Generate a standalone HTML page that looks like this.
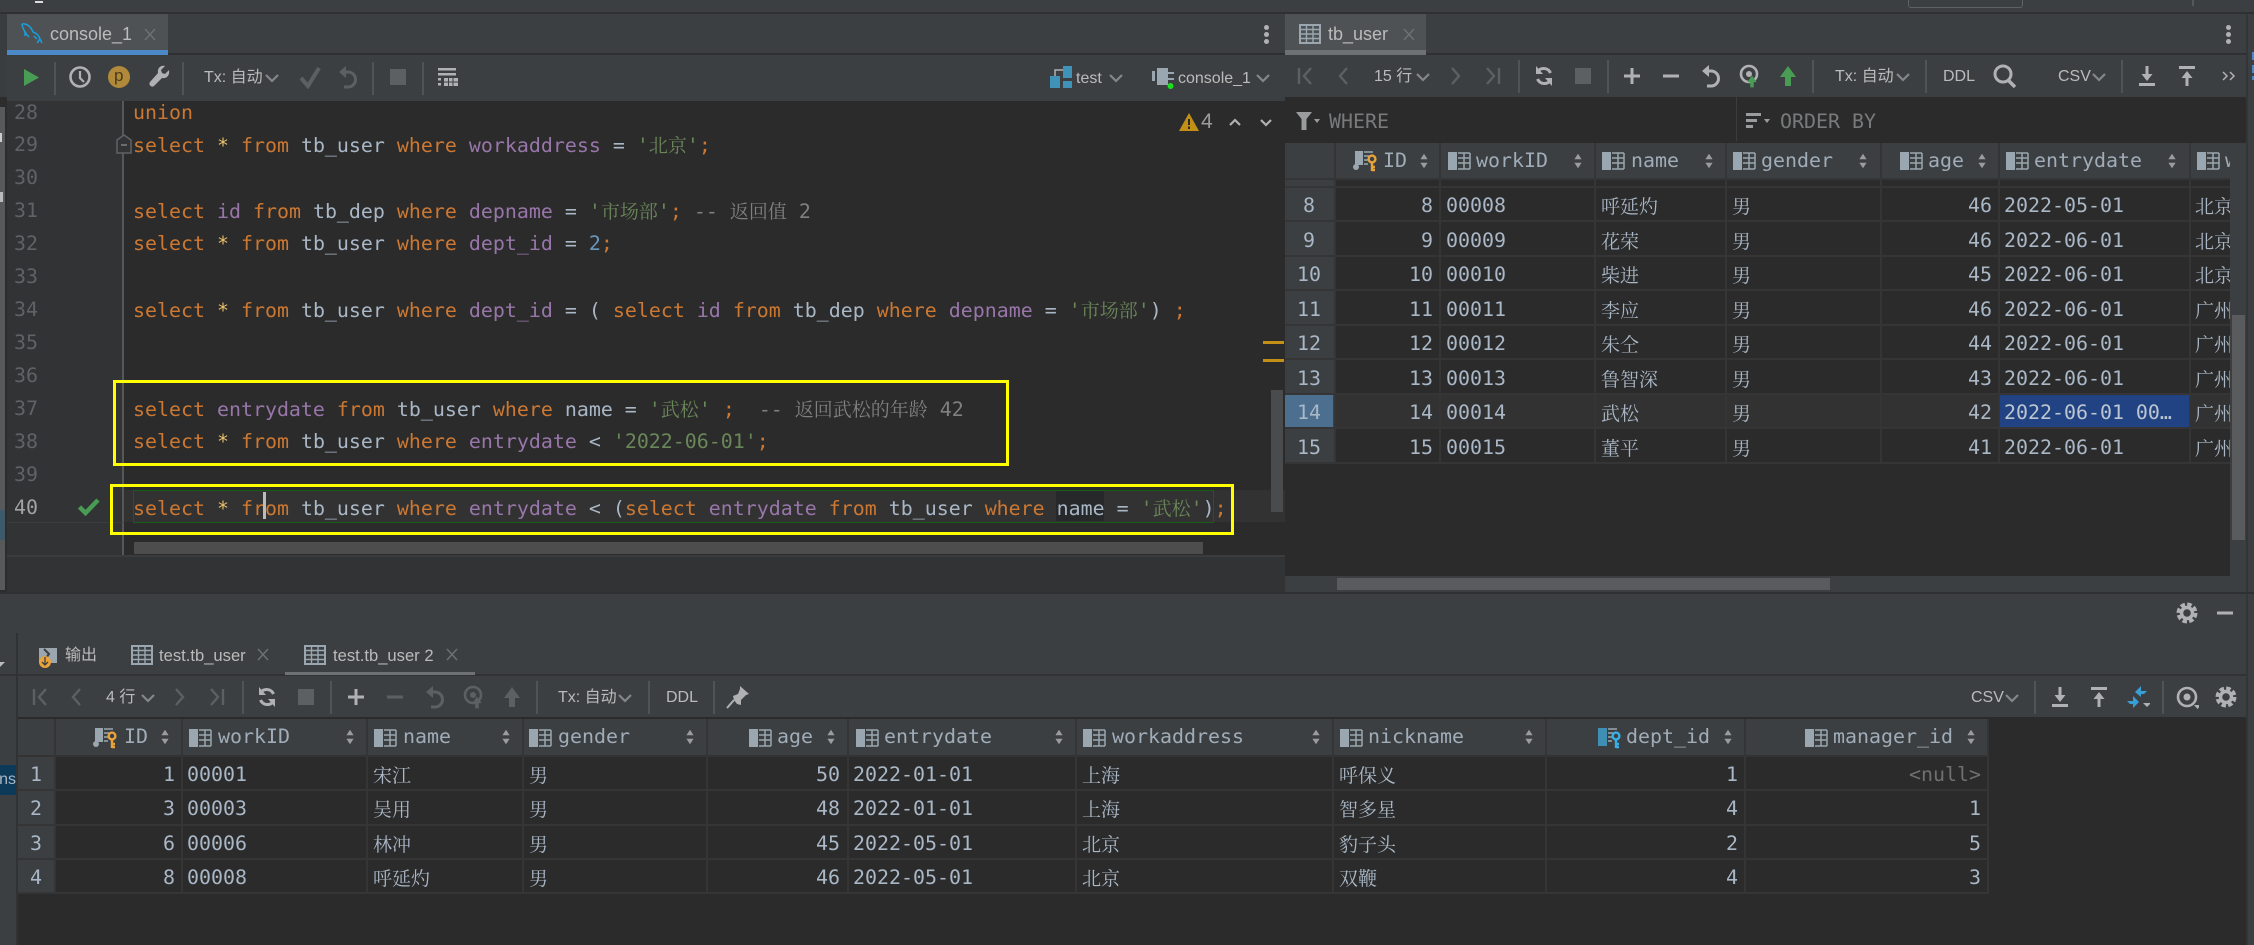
<!DOCTYPE html>
<html><head><meta charset="utf-8"><style>
html,body{margin:0;padding:0}
body{width:2254px;height:945px;overflow:hidden;position:relative;background:#3c3f41;font-family:"Liberation Sans","Noto Sans CJK SC",sans-serif;color:#bbb}
.a{position:absolute}
.i{position:absolute;width:24px;height:24px}
.sp{position:absolute;width:2px;background:#505456}
.t{position:absolute;white-space:pre;font-size:16px;line-height:24px;color:#bbbbbb;margin-top:1px}
.m,.l,.row span,.h{font-family:"DejaVu Sans Mono","Liberation Mono","Noto Serif CJK SC",monospace;font-size:19.93px;white-space:pre}
i{font-style:normal;font-size:19px;font-family:"Noto Serif CJK SC","Noto Sans CJK SC",serif}
.l{position:absolute;left:133px;height:33px;line-height:33px;color:#a9b7c6}
.n{position:absolute;left:14px;font-family:"DejaVu Sans Mono",monospace;font-size:19.93px;line-height:33px;color:#606366}
.k{color:#cc7832}.p{color:#9876aa}.s{color:#6a8759}.c{color:#808080}.d{color:#6897bb}.x{color:#e8bf6a}
.row{position:absolute;left:0;height:34px}
.row span{position:absolute;top:1px;line-height:34px;color:#a9b7c6}
.R{width:200px;text-align:right}
.h{position:absolute;line-height:34px;color:#a0adb9}
.hl{position:absolute;height:2px;background:#353535}
.vl{position:absolute;width:2px;background:#353535}
.gr{position:absolute;background:#3c3f41}
</style></head><body>
<svg width="0" height="0" style="position:absolute">
<defs>
<symbol id="first" viewBox="0 0 24 24"><path d="M6 4v16M18 4l-7 8 7 8" fill="none" stroke="currentColor" stroke-width="2.4"/></symbol>
<symbol id="prev" viewBox="0 0 24 24"><path d="M15 4l-7 8 7 8" fill="none" stroke="currentColor" stroke-width="2.4"/></symbol>
<symbol id="next" viewBox="0 0 24 24"><path d="M9 4l7 8-7 8" fill="none" stroke="currentColor" stroke-width="2.4"/></symbol>
<symbol id="last" viewBox="0 0 24 24"><path d="M6 4l7 8-7 8M18 4v16" fill="none" stroke="currentColor" stroke-width="2.4"/></symbol>
<symbol id="refresh" viewBox="0 0 24 24"><path d="M18.5 9a7.5 7.5 0 0 0-12.5-2M5.500 15a7.500 7.500 0 0 0 12.500 2" fill="none" stroke="currentColor" stroke-width="3"/><path d="M4 2v8h7zM20 22v-8h-7z" fill="currentColor"/></symbol>
<symbol id="stop" viewBox="0 0 24 24"><rect x="4" y="4" width="16" height="16" fill="#5d6062"/></symbol>
<symbol id="plus" viewBox="0 0 24 24"><path d="M12 4v16M4 12h16" fill="none" stroke="currentColor" stroke-width="3"/></symbol>
<symbol id="minus" viewBox="0 0 24 24"><path d="M4 12h16" fill="none" stroke="currentColor" stroke-width="3"/></symbol>
<symbol id="undo" viewBox="0 0 24 24"><path d="M8 7h3.500a7.500 7.500 0 0 1 8 7.500A7.500 7.500 0 0 1 11.500 22H8" fill="none" stroke="currentColor" stroke-width="3"/><path d="M10 1L3 7l7 6z" fill="currentColor"/></symbol>
<symbol id="revert" viewBox="0 0 24 24"><circle cx="11" cy="10" r="8" fill="none" stroke="currentColor" stroke-width="2.6"/><circle cx="11" cy="10" r="3" fill="currentColor"/></symbol>
<symbol id="up" viewBox="0 0 24 24"><path d="M12 2L4 13h5v9h6v-9h5z" fill="currentColor"/></symbol>
<symbol id="down" viewBox="0 0 24 24"><path d="M10.500 2h3v8h4l-5.500 7-5.500-7h4zM4 19h16v3H4z" fill="currentColor"/></symbol>
<symbol id="upl" viewBox="0 0 24 24"><path d="M4 2h16v3H4zM12 7l5.500 7h-4v8h-3v-8h-4z" fill="currentColor"/></symbol>
<symbol id="gear" viewBox="0 0 24 24"><circle cx="12" cy="12" r="8.500" fill="none" stroke="currentColor" stroke-width="4" stroke-dasharray="4.400 2.270"/><circle cx="12" cy="12" r="5.500" fill="none" stroke="currentColor" stroke-width="3.400"/></symbol>
<symbol id="ch" viewBox="0 0 24 24"><path d="M6 9l6 6 6-6" fill="none" stroke="#83878a" stroke-width="2.200"/></symbol>
<symbol id="grid" viewBox="0 0 24 24"><rect x="2" y="3" width="20" height="18" fill="none" stroke="#9aa7b0" stroke-width="2"/><path d="M2 7.500h20M2 12h20M2 16.500h20M8.500 3v18M15 3v18" stroke="#9aa7b0" stroke-width="1.400"/></symbol>
<symbol id="col" viewBox="0 0 24 24"><rect x="1" y="3" width="9" height="18" fill="#9aa7b0"/><path d="M11 4h12M11 9h12M11 14h12M11 20h12M17 4v16M23 4v16" stroke="#9aa7b0" stroke-width="1.500" fill="none"/></symbol>
<symbol id="key" viewBox="0 0 26 24"><rect x="3" y="3" width="8" height="14" fill="#9aa7b0"/><circle cx="4" cy="19" r="3" fill="#9aa7b0"/><path d="M12 4h9M12 8h5M12 12h4M12 16h4" stroke="#9aa7b0" stroke-width="1.600"/><circle cx="20" cy="11" r="3.400" fill="none" stroke="#e8a33d" stroke-width="2.400"/><path d="M20 14v9M20 19h3M20 22h3" stroke="#e8a33d" stroke-width="2.400"/></symbol>
<symbol id="keyb" viewBox="0 0 26 24"><rect x="2" y="3" width="9" height="18" fill="#3f8fb5"/><path d="M12 4h9M12 8h5M12 12h4M12 16h4" stroke="#9aa7b0" stroke-width="1.600"/><circle cx="20" cy="11" r="3.400" fill="none" stroke="#38b0e6" stroke-width="2.400"/><path d="M20 14v9M20 19h3M20 22h3" stroke="#38b0e6" stroke-width="2.400"/></symbol>
<symbol id="sort" viewBox="0 0 10 20"><path d="M5 2l4 6H1zM5 18l-4-6h8z" fill="#9a9c9e"/></symbol>
</defs></svg>

<!-- top strip -->
<div class="a" style="left:35px;top:1px;width:8px;height:2px;background:#ddd"></div>
<div class="a" style="left:1908px;top:-4px;width:113px;height:10px;border:1px solid #5e6263;border-radius:3px"></div>
<div class="a" style="left:2192px;top:0;width:2px;height:6px;background:#55585a"></div>
<div class="a" style="left:0;top:12px;width:2254px;height:2px;background:#2e3032"></div>

<!-- left sliver -->
<div class="a" style="left:0;top:14px;width:7px;height:83px;background:#3a3d3f"></div>
<div class="a" style="left:0;top:97px;width:7px;height:495px;background:#2d2d2d"></div>
<div class="a" style="left:0;top:107px;width:5px;height:483px;background:#58595b"></div>
<div class="a" style="left:0;top:510px;width:5px;height:30px;background:#3d5a6b"></div>
<div class="a" style="left:0;top:133px;width:2px;height:9px;background:#ccc"></div>
<div class="a" style="left:0;top:192px;width:3px;height:10px;background:#bbb"></div>

<!-- left tabbar -->
<div class="a" style="left:7px;top:14px;width:161px;height:36px;background:#4e5254"></div>
<div class="a" style="left:7px;top:50px;width:161px;height:5px;background:#4a88c7"></div>
<div class="a" style="left:168px;top:53px;width:1117px;height:2px;background:#2e3032"></div>
<svg class="a" style="left:20px;top:22px;width:24px;height:23px" viewBox="0 0 24 23"><path d="M2 2c5-1 9 3 11 8 3 1 6 3 7 7l2 4M20 17l-3 4M2 2c0 4 3 8 5 11l2 2M5 9l0 5M17 17l-3-3" fill="none" stroke="#1a9fdc" stroke-width="1.500"/></svg>
<div class="t" style="left:50px;top:21px;font-size:18px;color:#bbb">console_1</div>
<svg class="i" style="left:138px;top:23px;width:24px;height:24px"><path d="M7 6l10 11M17 6L7 17" stroke="#6c7072" stroke-width="1.500"/></svg>
<div class="a" style="left:1263.500px;top:25px;width:5px;height:5px;border-radius:3px;background:#afb1b3"></div>
<div class="a" style="left:1263.500px;top:32px;width:5px;height:5px;border-radius:3px;background:#afb1b3"></div>
<div class="a" style="left:1263.500px;top:39px;width:5px;height:5px;border-radius:3px;background:#afb1b3"></div>

<!-- left toolbar -->
<svg class="a" style="left:24px;top:69px;width:15px;height:17px"><path d="M0 0l15 8.500L0 17z" fill="#499c54"/></svg>
<div class="sp" style="left:54px;top:62px;height:33px"></div>
<svg class="i" style="left:68px;top:65px"><circle cx="12" cy="12" r="9.500" fill="none" stroke="#afb1b3" stroke-width="2.600"/><path d="M12 6v7l4 4" fill="none" stroke="#afb1b3" stroke-width="2.200"/></svg>
<svg class="i" style="left:107px;top:65px"><circle cx="12" cy="12" r="11" fill="#b08a3a"/></svg>
<div class="t" style="left:114px;top:63px;font-size:17px;color:#4a3a1a">p</div>
<svg class="i" style="left:147px;top:65px"><path d="M22 5l-4 4-3-1-1-3 4-4c-4-1-8 2-7 7L3 17c-2 3 2 6 4 4l8-8c5 1 8-3 7-8z" fill="#afb1b3"/></svg>
<div class="sp" style="left:182px;top:62px;height:33px"></div>
<div class="t" style="left:204px;top:65px">Tx: 自动</div>
<svg class="i" style="left:260px;top:66px"><use href="#ch"/></svg>
<svg class="i" style="left:298px;top:65px"><path d="M3 13l7 8L21 3" fill="none" stroke="#5d6062" stroke-width="4"/></svg>
<svg class="i" style="left:336px;top:65px;color:#5d6062"><use href="#undo"/></svg>
<div class="sp" style="left:372px;top:62px;height:33px"></div>
<svg class="i" style="left:386px;top:65px"><use href="#stop"/></svg>
<div class="sp" style="left:422px;top:62px;height:33px"></div>
<svg class="i" style="left:436px;top:66px"><path d="M2 2h18v2.500H2zM2 7h18v2.500H2z" fill="#afb1b3"/><path d="M2 12h3v2.500H2zM2 17h3v2.500H2zM8 12h14v8H8z" fill="#afb1b3"/><path d="M8 16h14M12.500 12v8M17 12v8" stroke="#3c3f41"/></svg>
<svg class="i" style="left:1049px;top:65px"><path d="M14 1h9v12h-9zM1 11h10v12H1zM14 16h9v7h-9z" fill="#3f93b8"/><path d="M6 11V5h8" fill="none" stroke="#afb1b3" stroke-width="1.500"/></svg>
<div class="t" style="left:1076px;top:66px">test</div>
<svg class="i" style="left:1104px;top:66px"><use href="#ch"/></svg>
<svg class="i" style="left:1151px;top:65px"><path d="M6 3h11v17H6zM1 6h3v10H1z" fill="#9aa7b0"/><path d="M17 8h6M17 14h6" stroke="#9aa7b0" stroke-width="2"/><circle cx="19.500" cy="21" r="3" fill="#19e01c"/></svg>
<div class="t" style="left:1178px;top:66px">console_1</div>
<svg class="i" style="left:1251px;top:66px"><use href="#ch"/></svg>

<!-- editor -->
<div class="a" style="left:7px;top:101px;width:1278px;height:454px;background:#2b2b2b"></div>
<div class="a" style="left:7px;top:101px;width:116px;height:454px;background:#313335"></div>
<div class="a" style="left:122px;top:101px;width:2px;height:454px;background:#555759"></div>
<div class="a" style="left:124px;top:490px;width:1161px;height:32px;background:#323232"></div>
<div class="a" style="left:7px;top:522px;width:116px;height:1px;background:#3a3c3e"></div>
<div class="a" style="left:7px;top:555px;width:1278px;height:2px;background:#3a3c3e"></div>
<div class="a" style="left:7px;top:557px;width:1278px;height:35px;background:#313335"></div>
<svg class="a" style="left:116px;top:134px;width:16px;height:20px"><path d="M1 6l7-5 7 5v13H1z" fill="#313335" stroke="#606366" stroke-width="1.500"/><path d="M5 11h6" stroke="#808080" stroke-width="1.500"/></svg>

<div class="n" style="top:95.500px">28</div>
<div class="n" style="top:128px">29</div>
<div class="n" style="top:161px">30</div>
<div class="n" style="top:194px">31</div>
<div class="n" style="top:227px">32</div>
<div class="n" style="top:260px">33</div>
<div class="n" style="top:293px">34</div>
<div class="n" style="top:326px">35</div>
<div class="n" style="top:359px">36</div>
<div class="n" style="top:392px">37</div>
<div class="n" style="top:425px">38</div>
<div class="n" style="top:458px">39</div>
<div class="n" style="top:491px;color:#a4a3a3">40</div>
<svg class="a" style="left:78px;top:498px;width:22px;height:18px"><path d="M1.500 9l6 6L20 2" fill="none" stroke="#499c54" stroke-width="4.500"/></svg>

<div class="a" style="left:1056px;top:491px;width:48px;height:30px;background:#26282a"></div>
<div class="a" style="left:133px;top:490px;width:1079px;height:31px;border:1px solid #175c17;box-sizing:content-box"></div>

<div class="l" style="top:95.500px"><span class="k">union</span></div>
<div class="l" style="top:127.500px"><span class="k">select</span> <span class="x">*</span> <span class="k">from</span> tb_user <span class="k">where</span> <span class="p">workaddress</span> = <span class="s">'<i>北京</i>'</span><span class="k">;</span></div>
<div class="l" style="top:194px"><span class="k">select</span> <span class="p">id</span> <span class="k">from</span> tb_dep <span class="k">where</span> <span class="p">depname</span> = <span class="s">'<i>市场部</i>'</span><span class="k">;</span> <span class="c">-- <i>返回值</i> 2</span></div>
<div class="l" style="top:227px"><span class="k">select</span> <span class="x">*</span> <span class="k">from</span> tb_user <span class="k">where</span> <span class="p">dept_id</span> = <span class="d">2</span><span class="k">;</span></div>
<div class="l" style="top:293px"><span class="k">select</span> <span class="x">*</span> <span class="k">from</span> tb_user <span class="k">where</span> <span class="p">dept_id</span> = ( <span class="k">select</span> <span class="p">id</span> <span class="k">from</span> tb_dep <span class="k">where</span> <span class="p">depname</span> = <span class="s">'<i>市场部</i>'</span>) <span class="k">;</span></div>
<div class="l" style="top:392px"><span class="k">select</span> <span class="p">entrydate</span> <span class="k">from</span> tb_user <span class="k">where</span> name = <span class="s">'<i>武松</i>'</span> <span class="k">;</span>  <span class="c">-- <i>返回武松的年龄</i> 42</span></div>
<div class="l" style="top:425px"><span class="k">select</span> <span class="x">*</span> <span class="k">from</span> tb_user <span class="k">where</span> <span class="p">entrydate</span> &lt; <span class="s">'2022-06-01'</span><span class="k">;</span></div>
<div class="l" style="top:491px"><span class="k">select</span> <span class="x">*</span> <span class="k">from</span> tb_user <span class="k">where</span> <span class="p">entrydate</span> &lt; (<span class="k">select</span> <span class="p">entrydate</span> <span class="k">from</span> tb_user <span class="k">where</span> name = <span class="s">'<i>武松</i>'</span>)<span class="k">;</span></div>
<div class="a" style="left:263px;top:492px;width:3px;height:27px;background:#bbbbbb"></div>

<!-- editor overlays -->
<svg class="a" style="left:1179px;top:113px;width:20px;height:18px"><path d="M10 0l10 18H0z" fill="#c29016"/><path d="M10 6v6M10 13.500v2.500" stroke="#2b2b2b" stroke-width="2"/></svg>
<div class="t" style="left:1201px;top:109px;font-size:21px;color:#9a9c9e">4</div>
<svg class="i" style="left:1223px;top:110px"><path d="M7 15l5-5 5 5" fill="none" stroke="#afb1b3" stroke-width="2.200"/></svg>
<svg class="i" style="left:1254px;top:110px"><path d="M7 10l5 5 5-5" fill="none" stroke="#afb1b3" stroke-width="2.200"/></svg>
<div class="a" style="left:1271px;top:390px;width:12px;height:122px;background:#494b4c"></div>
<div class="a" style="left:1263px;top:341px;width:21px;height:3px;background:#c29016"></div>
<div class="a" style="left:1263px;top:359px;width:21px;height:3px;background:#c29016"></div>
<div class="a" style="left:134px;top:542px;width:1069px;height:12px;background:#4d4d4d"></div>

<!-- yellow boxes -->
<div class="a" style="left:113px;top:380px;width:890px;height:80px;border:3px solid #ffff00"></div>
<div class="a" style="left:110px;top:484px;width:1118px;height:45px;border:3px solid #ffff00"></div>

<!-- right panel -->
<div class="a" style="left:1285px;top:14px;width:961px;height:39px;background:#3c3f41"></div>
<div class="a" style="left:1285px;top:14px;width:141px;height:36px;background:#4e5254"></div>
<div class="a" style="left:1285px;top:50px;width:141px;height:5px;background:#6d7173"></div>
<div class="a" style="left:1426px;top:53px;width:820px;height:2px;background:#2e3032"></div>
<svg class="i" style="left:1298px;top:22px"><use href="#grid"/></svg>
<div class="t" style="left:1328px;top:21px;font-size:18px">tb_user</div>
<svg class="i" style="left:1397px;top:23px"><path d="M7 6l10 11M17 6L7 17" stroke="#6c7072" stroke-width="1.500"/></svg>
<div class="a" style="left:2226px;top:25px;width:5px;height:5px;border-radius:3px;background:#afb1b3"></div>
<div class="a" style="left:2226px;top:32px;width:5px;height:5px;border-radius:3px;background:#afb1b3"></div>
<div class="a" style="left:2226px;top:39px;width:5px;height:5px;border-radius:3px;background:#afb1b3"></div>
<div class="a" style="left:2246px;top:14px;width:2px;height:578px;background:#333537"></div>
<div class="a" style="left:2252px;top:52px;width:2px;height:8px;background:#4a88c7"></div>
<div class="a" style="left:2252px;top:65px;width:2px;height:8px;background:#4a88c7"></div>
<div class="a" style="left:2252px;top:76px;width:2px;height:4px;background:#4a88c7"></div>

<!-- right toolbar, cy=76 -->
<svg class="i" style="left:1293px;top:64px;color:#5d6062"><use href="#first"/></svg>
<svg class="i" style="left:1332px;top:64px;color:#5d6062"><use href="#prev"/></svg>
<div class="t" style="left:1374px;top:64px">15 行</div>
<svg class="i" style="left:1411px;top:65px"><use href="#ch"/></svg>
<svg class="i" style="left:1443px;top:64px;color:#5d6062"><use href="#next"/></svg>
<svg class="i" style="left:1481px;top:64px;color:#5d6062"><use href="#last"/></svg>
<div class="sp" style="left:1518px;top:60px;height:33px"></div>
<svg class="i" style="left:1532px;top:64px;color:#afb1b3"><use href="#refresh"/></svg>
<svg class="i" style="left:1571px;top:64px"><use href="#stop"/></svg>
<div class="sp" style="left:1607px;top:60px;height:33px"></div>
<svg class="i" style="left:1620px;top:64px;color:#afb1b3"><use href="#plus"/></svg>
<svg class="i" style="left:1659px;top:64px;color:#afb1b3"><use href="#minus"/></svg>
<svg class="i" style="left:1699px;top:64px;color:#afb1b3"><use href="#undo"/></svg>
<svg class="i" style="left:1738px;top:64px;color:#afb1b3"><use href="#revert"/></svg>
<svg class="a" style="left:1745px;top:74px;width:14px;height:15px;color:#499c54"><use href="#up"/></svg>
<svg class="i" style="left:1776px;top:64px;color:#499c54"><use href="#up"/></svg>
<div class="sp" style="left:1812px;top:60px;height:33px"></div>
<div class="t" style="left:1835px;top:64px">Tx: 自动</div>
<svg class="i" style="left:1891px;top:65px"><use href="#ch"/></svg>
<div class="sp" style="left:1925px;top:60px;height:33px"></div>
<div class="t" style="left:1943px;top:64px">DDL</div>
<svg class="i" style="left:1993px;top:64px"><circle cx="10" cy="10" r="8" fill="none" stroke="#afb1b3" stroke-width="3"/><path d="M15 16l7 7" stroke="#afb1b3" stroke-width="3.500"/></svg>
<div class="t" style="left:2058px;top:64px">CSV</div>
<svg class="i" style="left:2087px;top:65px"><use href="#ch"/></svg>
<div class="sp" style="left:2121px;top:60px;height:33px"></div>
<svg class="i" style="left:2135px;top:64px;color:#afb1b3"><use href="#down"/></svg>
<svg class="i" style="left:2175px;top:64px;color:#afb1b3"><use href="#upl"/></svg>
<svg class="i" style="left:2217px;top:64px"><path d="M6 8l4 4-4 4M13 8l4 4-4 4" fill="none" stroke="#afb1b3" stroke-width="1.500"/></svg>

<!-- filter bar -->
<div class="a" style="left:1285px;top:97px;width:961px;height:495px;background:#2b2b2b"></div>
<div class="a" style="left:1736px;top:97px;width:1px;height:44px;background:#3a3c3e"></div>
<svg class="a" style="left:1296px;top:112px;width:24px;height:18px"><path d="M0 0h16l-5.500 7v11h-5V7z" fill="#9a9c9e"/><path d="M18 7h6l-3 4z" fill="#9a9c9e"/></svg>
<div class="m a" style="left:1329px;top:108px;line-height:28px;color:#787a7c">WHERE</div>
<svg class="a" style="left:1746px;top:112px;width:24px;height:18px"><path d="M0 1h15v3H0zM0 7h11v3H0zM0 13h7v3H0z" fill="#9a9c9e"/><path d="M18 7h6l-3 4z" fill="#9a9c9e"/></svg>
<div class="m a" style="left:1780px;top:108px;line-height:28px;color:#787a7c">ORDER BY</div>

<!-- right table -->
<div class="gr" style="left:1285px;top:143px;width:945px;height:35px"></div>
<div class="gr" style="left:1285px;top:178px;width:50px;height:285px"></div>
<div class="a" style="left:1285px;top:395px;width:48px;height:33px;background:#4c6f90"></div>
<div class="a" style="left:1335px;top:395px;width:895px;height:33px;background:#323232"></div>
<div class="a" style="left:2000px;top:395px;width:189px;height:33px;background:#214283"></div>
<div class="hl" style="left:1285px;top:178px;width:945px"></div>
<div class="hl" style="left:1285px;top:186px;width:945px"></div>
<div class="hl" style="left:1285px;top:220px;width:945px"></div>
<div class="hl" style="left:1285px;top:255px;width:945px"></div>
<div class="hl" style="left:1285px;top:289px;width:945px"></div>
<div class="hl" style="left:1285px;top:324px;width:945px"></div>
<div class="hl" style="left:1285px;top:358px;width:945px"></div>
<div class="hl" style="left:1285px;top:393px;width:945px"></div>
<div class="hl" style="left:1285px;top:427px;width:945px"></div>
<div class="hl" style="left:1285px;top:462px;width:945px"></div>
<div class="vl" style="left:1334px;top:143px;height:320px"></div>
<div class="vl" style="left:1439px;top:143px;height:320px"></div>
<div class="vl" style="left:1594px;top:143px;height:320px"></div>
<div class="vl" style="left:1725px;top:143px;height:320px"></div>
<div class="vl" style="left:1880px;top:143px;height:320px"></div>
<div class="vl" style="left:1998px;top:143px;height:320px"></div>
<div class="vl" style="left:2189px;top:143px;height:320px"></div>

<svg class="i" style="left:1352px;top:148px;width:26px"><use href="#key"/></svg><div class="h" style="left:1383px;top:144px">ID</div><svg class="a" style="left:1419px;top:152px;width:10px;height:18px"><use href="#sort"/></svg>
<svg class="i" style="left:1447px;top:149px"><use href="#col"/></svg><div class="h" style="left:1476px;top:144px">workID</div><svg class="a" style="left:1573px;top:152px;width:10px;height:18px"><use href="#sort"/></svg>
<svg class="i" style="left:1601px;top:149px"><use href="#col"/></svg><div class="h" style="left:1631px;top:144px">name</div><svg class="a" style="left:1704px;top:152px;width:10px;height:18px"><use href="#sort"/></svg>
<svg class="i" style="left:1732px;top:149px"><use href="#col"/></svg><div class="h" style="left:1761px;top:144px">gender</div><svg class="a" style="left:1858px;top:152px;width:10px;height:18px"><use href="#sort"/></svg>
<svg class="i" style="left:1899px;top:149px"><use href="#col"/></svg><div class="h" style="left:1928px;top:144px">age</div><svg class="a" style="left:1977px;top:152px;width:10px;height:18px"><use href="#sort"/></svg>
<svg class="i" style="left:2005px;top:149px"><use href="#col"/></svg><div class="h" style="left:2034px;top:144px">entrydate</div><svg class="a" style="left:2167px;top:152px;width:10px;height:18px"><use href="#sort"/></svg>
<div class="a" style="left:2190px;top:143px;width:40px;height:35px;overflow:hidden"><svg class="i" style="left:6px;top:6px"><use href="#col"/></svg><div class="h" style="left:35px;top:1px">w</div></div>

<div class="row" style="top:188px"><span style="left:1285px;width:48px;text-align:center">8</span><span class="R" style="left:1233px">8</span><span style="left:1446px">00008</span><span style="left:1601px"><i>呼延灼</i></span><span style="left:1732px"><i>男</i></span><span class="R" style="left:1792px">46</span><span style="left:2004px">2022-05-01</span><span style="left:2195px;width:35px;overflow:hidden"><i>北京</i></span></div>
<div class="row" style="top:223px"><span style="left:1285px;width:48px;text-align:center">9</span><span class="R" style="left:1233px">9</span><span style="left:1446px">00009</span><span style="left:1601px"><i>花荣</i></span><span style="left:1732px"><i>男</i></span><span class="R" style="left:1792px">46</span><span style="left:2004px">2022-06-01</span><span style="left:2195px;width:35px;overflow:hidden"><i>北京</i></span></div>
<div class="row" style="top:257px"><span style="left:1285px;width:48px;text-align:center">10</span><span class="R" style="left:1233px">10</span><span style="left:1446px">00010</span><span style="left:1601px"><i>柴进</i></span><span style="left:1732px"><i>男</i></span><span class="R" style="left:1792px">45</span><span style="left:2004px">2022-06-01</span><span style="left:2195px;width:35px;overflow:hidden"><i>北京</i></span></div>
<div class="row" style="top:292px"><span style="left:1285px;width:48px;text-align:center">11</span><span class="R" style="left:1233px">11</span><span style="left:1446px">00011</span><span style="left:1601px"><i>李应</i></span><span style="left:1732px"><i>男</i></span><span class="R" style="left:1792px">46</span><span style="left:2004px">2022-06-01</span><span style="left:2195px;width:35px;overflow:hidden"><i>广州</i></span></div>
<div class="row" style="top:326px"><span style="left:1285px;width:48px;text-align:center">12</span><span class="R" style="left:1233px">12</span><span style="left:1446px">00012</span><span style="left:1601px"><i>朱仝</i></span><span style="left:1732px"><i>男</i></span><span class="R" style="left:1792px">44</span><span style="left:2004px">2022-06-01</span><span style="left:2195px;width:35px;overflow:hidden"><i>广州</i></span></div>
<div class="row" style="top:361px"><span style="left:1285px;width:48px;text-align:center">13</span><span class="R" style="left:1233px">13</span><span style="left:1446px">00013</span><span style="left:1601px"><i>鲁智深</i></span><span style="left:1732px"><i>男</i></span><span class="R" style="left:1792px">43</span><span style="left:2004px">2022-06-01</span><span style="left:2195px;width:35px;overflow:hidden"><i>广州</i></span></div>
<div class="row" style="top:395px"><span style="left:1285px;width:48px;text-align:center">14</span><span class="R" style="left:1233px">14</span><span style="left:1446px">00014</span><span style="left:1601px"><i>武松</i></span><span style="left:1732px"><i>男</i></span><span class="R" style="left:1792px">42</span><span style="left:2004px;color:#bcc6d0">2022-06-01 00…</span><span style="left:2195px;width:35px;overflow:hidden"><i>广州</i></span></div>
<div class="row" style="top:430px"><span style="left:1285px;width:48px;text-align:center">15</span><span class="R" style="left:1233px">15</span><span style="left:1446px">00015</span><span style="left:1601px"><i>董平</i></span><span style="left:1732px"><i>男</i></span><span class="R" style="left:1792px">41</span><span style="left:2004px">2022-06-01</span><span style="left:2195px;width:35px;overflow:hidden"><i>广州</i></span></div>

<!-- right table scrollbars -->
<div class="a" style="left:2230px;top:143px;width:16px;height:433px;background:#3c3f41"></div>
<div class="a" style="left:2232px;top:315px;width:13px;height:225px;background:#595b5d"></div>
<div class="a" style="left:1285px;top:576px;width:961px;height:16px;background:#3c3f41"></div>
<div class="a" style="left:1337px;top:578px;width:493px;height:12px;background:#595b5d"></div>

<!-- bottom panel -->
<div class="a" style="left:0;top:592px;width:2254px;height:2px;background:#2e3032"></div>
<svg class="i" style="left:2175px;top:601px;color:#afb1b3"><use href="#gear"/></svg>
<svg class="i" style="left:2213px;top:601px;color:#afb1b3"><use href="#minus"/></svg>
<div class="a" style="left:16px;top:633px;width:2px;height:312px;background:#303234"></div>
<div class="a" style="left:0;top:674px;width:2246px;height:2px;background:#303234"></div>
<div class="a" style="left:2246px;top:594px;width:2px;height:351px;background:#333537"></div>
<svg class="a" style="left:0;top:662px;width:5px;height:6px"><path d="M0 0h5L0 5z" fill="#bbb"/></svg>
<div class="a" style="left:0;top:765px;width:16px;height:30px;background:#0d3a58;color:#a9b7c6;font-size:16px;line-height:30px;text-align:right;padding-right:0;white-space:pre;overflow:hidden;direction:rtl">ns</div>

<svg class="a" style="left:38px;top:647px;width:20px;height:22px"><rect x="1" y="1" width="18" height="15" fill="#9aa7b0"/><path d="M6 2l5 5-3 4" fill="none" stroke="#3c3f41" stroke-width="2"/><circle cx="7" cy="15" r="6" fill="#e8a33d"/><path d="M7 10v8M4 15l3 3 3-3" fill="none" stroke="#3c3f41" stroke-width="1.300"/></svg>
<div class="t" style="left:65px;top:643px;font-size:16px">输出</div>
<svg class="i" style="left:130px;top:643px"><use href="#grid"/></svg>
<div class="t" style="left:159px;top:643px;font-size:16.600px">test.tb_user</div>
<svg class="i" style="left:251px;top:643px"><path d="M7 6l10 11M17 6L7 17" stroke="#6c7072" stroke-width="1.500"/></svg>
<svg class="i" style="left:303px;top:643px"><use href="#grid"/></svg>
<div class="t" style="left:333px;top:643px;font-size:16.600px">test.tb_user 2</div>
<svg class="i" style="left:440px;top:643px"><path d="M7 6l10 11M17 6L7 17" stroke="#6c7072" stroke-width="1.500"/></svg>
<div class="a" style="left:285px;top:672px;width:190px;height:3px;background:#6d7173"></div>

<!-- bottom toolbar cy=697 -->
<svg class="i" style="left:28px;top:685px;color:#5d6062"><use href="#first"/></svg>
<svg class="i" style="left:65px;top:685px;color:#5d6062"><use href="#prev"/></svg>
<div class="t" style="left:106px;top:685px">4 行</div>
<svg class="i" style="left:136px;top:686px"><use href="#ch"/></svg>
<svg class="i" style="left:167px;top:685px;color:#5d6062"><use href="#next"/></svg>
<svg class="i" style="left:205px;top:685px;color:#5d6062"><use href="#last"/></svg>
<div class="sp" style="left:242px;top:681px;height:33px"></div>
<svg class="i" style="left:255px;top:685px;color:#afb1b3"><use href="#refresh"/></svg>
<svg class="i" style="left:294px;top:685px"><use href="#stop"/></svg>
<div class="sp" style="left:330px;top:681px;height:33px"></div>
<svg class="i" style="left:344px;top:685px;color:#afb1b3"><use href="#plus"/></svg>
<svg class="i" style="left:383px;top:685px;color:#5d6062"><use href="#minus"/></svg>
<svg class="i" style="left:423px;top:685px;color:#5d6062"><use href="#undo"/></svg>
<svg class="i" style="left:462px;top:685px;color:#5d6062"><use href="#revert"/></svg>
<svg class="a" style="left:470px;top:695px;width:14px;height:15px;color:#5d6062"><use href="#up"/></svg>
<svg class="i" style="left:500px;top:685px;color:#5d6062"><use href="#up"/></svg>
<div class="sp" style="left:536px;top:681px;height:33px"></div>
<div class="t" style="left:558px;top:685px">Tx: 自动</div>
<svg class="i" style="left:613px;top:686px"><use href="#ch"/></svg>
<div class="sp" style="left:648px;top:681px;height:33px"></div>
<div class="t" style="left:666px;top:685px">DDL</div>
<div class="sp" style="left:713px;top:681px;height:33px"></div>
<svg class="i" style="left:726px;top:685px"><path d="M14 1l9 8-3 1-5 5v5l-4-1-3-4-1-4 5-2 2-5z" fill="#afb1b3"/><path d="M8 15l-7 8" stroke="#afb1b3" stroke-width="2"/></svg>
<div class="t" style="left:1971px;top:685px">CSV</div>
<svg class="i" style="left:2000px;top:686px"><use href="#ch"/></svg>
<div class="sp" style="left:2034px;top:681px;height:33px"></div>
<svg class="i" style="left:2048px;top:685px;color:#afb1b3"><use href="#down"/></svg>
<svg class="i" style="left:2087px;top:685px;color:#afb1b3"><use href="#upl"/></svg>
<svg class="i" style="left:2126px;top:685px"><path d="M21 6h-6V1l-6 6 6 5V9h3zM1 16h6v-5l6 6-6 6v-4H4z" fill="#389fd6"/><path d="M19 19h8l-4 4z" transform="translate(-2 -1)" fill="#afb1b3"/></svg>
<div class="sp" style="left:2162px;top:681px;height:33px"></div>
<svg class="i" style="left:2175px;top:685px"><circle cx="12" cy="12" r="9" fill="none" stroke="#afb1b3" stroke-width="2.600"/><circle cx="12" cy="12" r="3.500" fill="#afb1b3"/><path d="M19 20h7l-3.500 4z" fill="#afb1b3"/></svg>
<svg class="i" style="left:2214px;top:685px;color:#afb1b3"><use href="#gear"/></svg>

<!-- bottom table -->
<div class="a" style="left:18px;top:717px;width:2228px;height:228px;background:#2b2b2b"></div>
<div class="gr" style="left:18px;top:719px;width:1970px;height:36px"></div>
<div class="gr" style="left:18px;top:755px;width:36px;height:138px"></div>
<div class="hl" style="left:18px;top:755px;width:1970px;background:#333"></div>
<div class="hl" style="left:18px;top:789px;width:1970px"></div>
<div class="hl" style="left:18px;top:824px;width:1970px"></div>
<div class="hl" style="left:18px;top:858px;width:1970px"></div>
<div class="hl" style="left:18px;top:892px;width:1970px"></div>
<div class="vl" style="left:54px;top:719px;height:175px"></div>
<div class="vl" style="left:181px;top:719px;height:175px"></div>
<div class="vl" style="left:366px;top:719px;height:175px"></div>
<div class="vl" style="left:522px;top:719px;height:175px"></div>
<div class="vl" style="left:706px;top:719px;height:175px"></div>
<div class="vl" style="left:847px;top:719px;height:175px"></div>
<div class="vl" style="left:1075px;top:719px;height:175px"></div>
<div class="vl" style="left:1332px;top:719px;height:175px"></div>
<div class="vl" style="left:1545px;top:719px;height:175px"></div>
<div class="vl" style="left:1744px;top:719px;height:175px"></div>
<div class="vl" style="left:1987px;top:719px;height:175px"></div>

<svg class="i" style="left:92px;top:725px;width:26px"><use href="#key"/></svg><div class="h" style="left:124px;top:720px">ID</div><svg class="a" style="left:160px;top:728px;width:10px;height:18px"><use href="#sort"/></svg>
<svg class="i" style="left:188px;top:726px"><use href="#col"/></svg><div class="h" style="left:218px;top:720px">workID</div><svg class="a" style="left:345px;top:728px;width:10px;height:18px"><use href="#sort"/></svg>
<svg class="i" style="left:373px;top:726px"><use href="#col"/></svg><div class="h" style="left:403px;top:720px">name</div><svg class="a" style="left:501px;top:728px;width:10px;height:18px"><use href="#sort"/></svg>
<svg class="i" style="left:528px;top:726px"><use href="#col"/></svg><div class="h" style="left:558px;top:720px">gender</div><svg class="a" style="left:685px;top:728px;width:10px;height:18px"><use href="#sort"/></svg>
<svg class="i" style="left:748px;top:726px"><use href="#col"/></svg><div class="h" style="left:777px;top:720px">age</div><svg class="a" style="left:826px;top:728px;width:10px;height:18px"><use href="#sort"/></svg>
<svg class="i" style="left:855px;top:726px"><use href="#col"/></svg><div class="h" style="left:884px;top:720px">entrydate</div><svg class="a" style="left:1054px;top:728px;width:10px;height:18px"><use href="#sort"/></svg>
<svg class="i" style="left:1082px;top:726px"><use href="#col"/></svg><div class="h" style="left:1112px;top:720px">workaddress</div><svg class="a" style="left:1311px;top:728px;width:10px;height:18px"><use href="#sort"/></svg>
<svg class="i" style="left:1339px;top:726px"><use href="#col"/></svg><div class="h" style="left:1368px;top:720px">nickname</div><svg class="a" style="left:1524px;top:728px;width:10px;height:18px"><use href="#sort"/></svg>
<svg class="i" style="left:1596px;top:725px;width:26px"><use href="#keyb"/></svg><div class="h" style="left:1626px;top:720px">dept_id</div><svg class="a" style="left:1723px;top:728px;width:10px;height:18px"><use href="#sort"/></svg>
<svg class="i" style="left:1804px;top:726px"><use href="#col"/></svg><div class="h" style="left:1833px;top:720px">manager_id</div><svg class="a" style="left:1966px;top:728px;width:10px;height:18px"><use href="#sort"/></svg>

<div class="row" style="top:757px"><span style="left:18px;width:36px;text-align:center">1</span><span class="R" style="left:-25px">1</span><span style="left:187px">00001</span><span style="left:373px"><i>宋江</i></span><span style="left:529px"><i>男</i></span><span class="R" style="left:640px">50</span><span style="left:853px">2022-01-01</span><span style="left:1082px"><i>上海</i></span><span style="left:1339px"><i>呼保义</i></span><span class="R" style="left:1538px">1</span><span class="R" style="left:1781px;color:#6f7072">&lt;null&gt;</span></div>
<div class="row" style="top:791px"><span style="left:18px;width:36px;text-align:center">2</span><span class="R" style="left:-25px">3</span><span style="left:187px">00003</span><span style="left:373px"><i>吴用</i></span><span style="left:529px"><i>男</i></span><span class="R" style="left:640px">48</span><span style="left:853px">2022-01-01</span><span style="left:1082px"><i>上海</i></span><span style="left:1339px"><i>智多星</i></span><span class="R" style="left:1538px">4</span><span class="R" style="left:1781px">1</span></div>
<div class="row" style="top:826px"><span style="left:18px;width:36px;text-align:center">3</span><span class="R" style="left:-25px">6</span><span style="left:187px">00006</span><span style="left:373px"><i>林冲</i></span><span style="left:529px"><i>男</i></span><span class="R" style="left:640px">45</span><span style="left:853px">2022-05-01</span><span style="left:1082px"><i>北京</i></span><span style="left:1339px"><i>豹子头</i></span><span class="R" style="left:1538px">2</span><span class="R" style="left:1781px">5</span></div>
<div class="row" style="top:860px"><span style="left:18px;width:36px;text-align:center">4</span><span class="R" style="left:-25px">8</span><span style="left:187px">00008</span><span style="left:373px"><i>呼延灼</i></span><span style="left:529px"><i>男</i></span><span class="R" style="left:640px">46</span><span style="left:853px">2022-05-01</span><span style="left:1082px"><i>北京</i></span><span style="left:1339px"><i>双鞭</i></span><span class="R" style="left:1538px">4</span><span class="R" style="left:1781px">3</span></div>
</body></html>
